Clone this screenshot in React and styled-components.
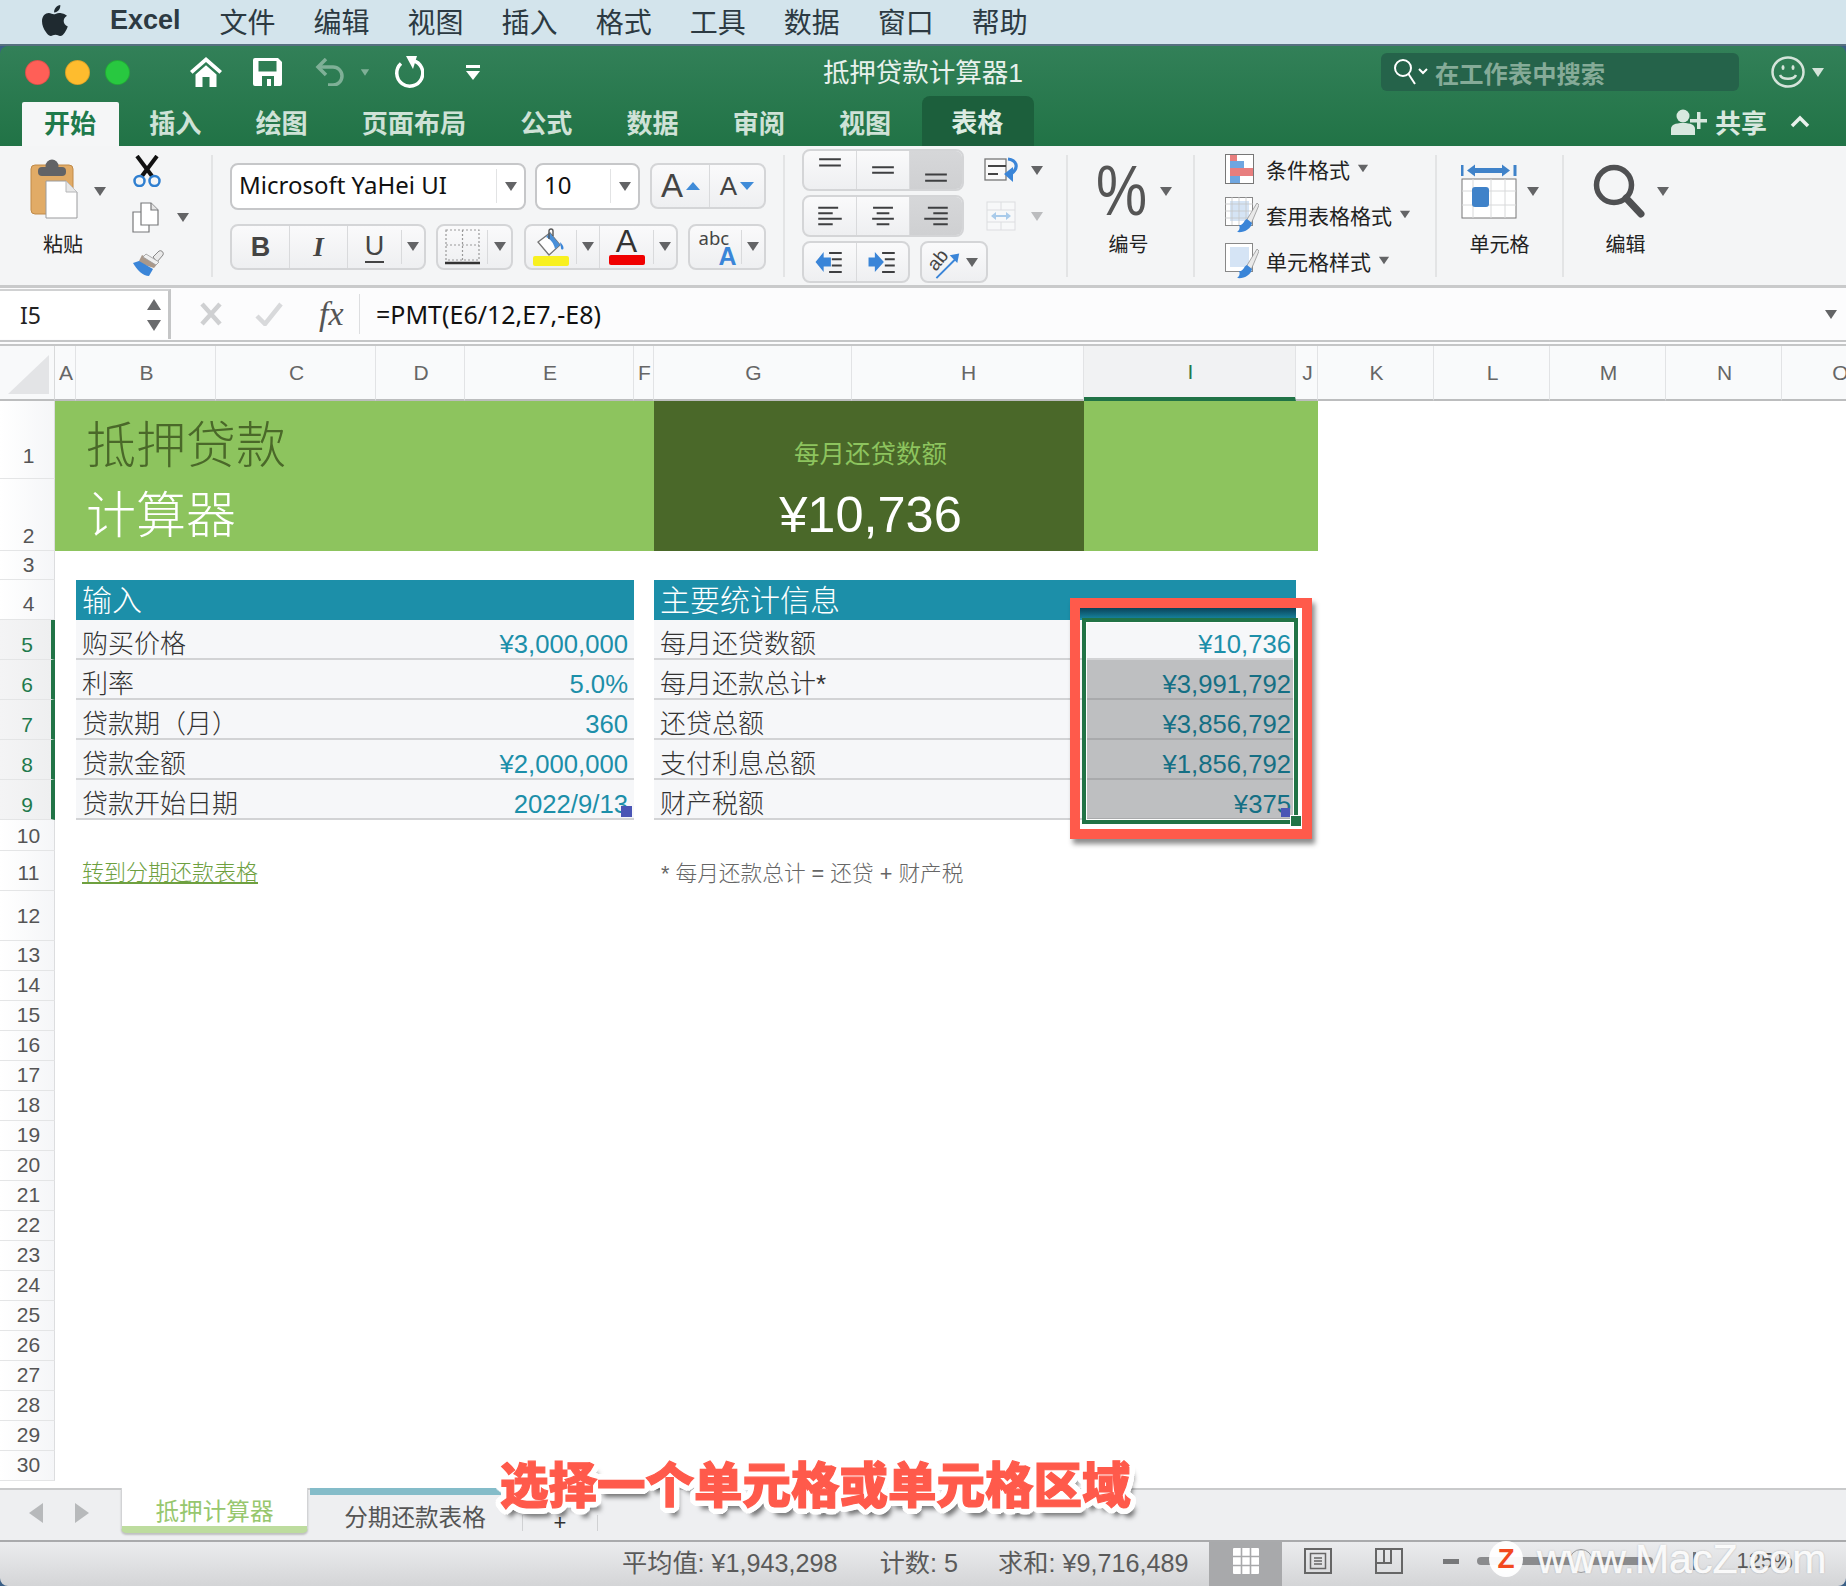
import styled, { createGlobalStyle } from "styled-components";

const CJK = `"Liberation Sans", "Noto Sans CJK SC", sans-serif`;
const SERIF = `"Liberation Sans", "Noto Sans CJK SC", sans-serif`;

// white outline for the big caption, a ring of hard text shadows
const outlineRing = Array.from({ length: 24 }, (_, i) => {
  const a = (i / 24) * Math.PI * 2;
  return `${(Math.cos(a) * 6).toFixed(1)}px ${(Math.sin(a) * 6).toFixed(1)}px 0 #fff`;
}).join(", ");

const GlobalStyle = createGlobalStyle`
  html, body {
    margin: 0;
    padding: 0;
    background: #3a5f86;
  }
  * {
    box-sizing: border-box;
  }
`;

const Screen = styled.div`
  position: relative;
  width: 1846px;
  height: 1586px;
  display: flex;
  flex-direction: column;
  overflow: hidden;
  font-family: ${CJK};
`;

/* mac menu bar */
const MenuBar = styled.div`
  height: 46px;
  flex: none;
  display: flex;
  align-items: center;
  gap: 38px;
  padding: 0 0 3px 42px;
  background: #d3e4ec;
  border-bottom: 2px solid #56707f;
  color: #2c3a42;
  font-size: 28px;
`;

const MenuBrand = styled.span`
  font-family: "Liberation Sans", sans-serif;
  font-weight: 700;
  font-size: 27px;
  margin-left: 4px;
  margin-right: 1px;
`;

const Window = styled.div`
  flex: 1;
  display: flex;
  flex-direction: column;
  border-radius: 8px;
  overflow: hidden;
  min-height: 0;
`;

const GreenHead = styled.header`
  height: 100px;
  flex: none;
  display: flex;
  flex-direction: column;
  background: linear-gradient(#328058, #217346);
`;

const TitleRow = styled.div`
  height: 50px;
  padding-top: 2px;
  display: grid;
  grid-template-columns: 1fr auto 1fr;
  align-items: center;
`;

const TitleLeft = styled.div`
  display: flex;
  align-items: center;
  padding-left: 25px;
`;

const Light = styled.span`
  width: 25px;
  height: 25px;
  border-radius: 50%;
  background: ${({ $color }) => $color};
  border: 1px solid rgba(0, 0, 0, 0.14);
  margin-right: 15px;
`;

const QuickIcon = styled.span`
  display: flex;
  align-items: center;
  margin-left: ${({ $ml }) => $ml}px;
`;

const WindowTitle = styled.div`
  color: #e8f1ec;
  font-size: 26.5px;
  line-height: 30px;
  padding-top: 2px;
`;

const TitleRight = styled.div`
  display: flex;
  align-items: center;
  justify-content: flex-end;
  padding-right: 22px;
`;

const SearchBox = styled.div`
  width: 358px;
  height: 38px;
  margin-right: 32px;
  padding-left: 12px;
  display: flex;
  align-items: center;
  gap: 6px;
  border-radius: 6px;
  background: #25634a;
  color: #85ab98;
  font-size: 24.3px;
  font-weight: 700;
`;

const TabRow = styled.div`
  height: 50px;
  padding-left: 22px;
  display: flex;
  align-items: flex-end;
`;

const RibbonTab = styled.div`
  height: ${({ $kind }) => ($kind === "table" ? 50 : 44)}px;
  padding: ${({ $kind }) =>
    $kind === "active" ? "0 23px 5px 22px" : $kind === "table" ? "0 30px 0 29px" : "0 27px 5px"};
  margin: ${({ $kind }) =>
    $kind === "active" ? "0 3px 0 0" : $kind === "table" ? "0 0 0 4px" : "0"};
  display: flex;
  align-items: center;
  border-radius: ${({ $kind }) => ($kind === "table" ? "8px 8px 0 0" : "2px 2px 0 0")};
  background: ${({ $kind }) =>
    $kind === "active" ? "#f5f6f7" : $kind === "table" ? "#1c5f3c" : "transparent"};
  color: ${({ $kind }) =>
    $kind === "active" ? "#1f7a4c" : $kind === "table" ? "#dcebe2" : "#cfe2d7"};
  font-size: 26.13px;
  font-weight: 700;
`;

const ShareArea = styled.div`
  margin-left: auto;
  height: 44px;
  padding: 0 36px 5px 0;
  display: flex;
  align-items: center;
  color: #d8e8df;
  font-size: 26px;
  font-weight: 700;
`;

const ShareLabel = styled.span`
  margin: 0 23px 0 8px;
`;

/* ribbon */
const Ribbon = styled.section`
  height: 142px;
  flex: none;
  display: flex;
  padding: 9px 0;
  background: #f4f5f6;
  border-bottom: 3px solid #c9cacb;
`;

const RibbonSection = styled.div`
  width: ${({ $w }) => $w}px;
  height: 122px;
  flex: none;
  display: flex;
  align-items: ${({ $top }) => ($top ? "flex-start" : "center")};
  justify-content: ${({ $center }) => ($center ? "center" : "flex-start")};
  padding-left: ${({ $pl }) => $pl || 0}px;
  padding-right: ${({ $pr }) => $pr || 0}px;
  border-right: ${({ $last }) => ($last ? "none" : "2px solid #e3e4e5")};
`;

const BigTool = styled.div`
  width: ${({ $w }) => ($w ? `${$w}px` : "auto")};
  display: flex;
  flex-direction: column;
  align-items: center;
`;

const BigIconRow = styled.div`
  height: 72px;
  display: flex;
  align-items: center;
  gap: ${({ $gap }) => $gap ?? 10}px;
  margin-left: ${({ $ml }) => $ml || 0}px;
`;

const PasteSlot = styled.span`
  display: flex;
  margin: 0 19px 4px 0;
`;

const BigLabel = styled.div`
  margin-top: 6px;
  font-size: 20px;
  line-height: 24px;
  color: #222;
`;

const Caret = styled.span`
  display: inline-block;
  flex: none;
  width: 0;
  height: 0;
  border-left: 6px solid transparent;
  border-right: 6px solid transparent;
  border-top: 9px solid ${({ $tone }) => $tone || "#636466"};
`;

const MiniCaret = styled(Caret)`
  transform: scale(0.7);
`;

const SmallTools = styled.div`
  height: 122px;
  margin-left: 26px;
  display: flex;
  flex-direction: column;
  justify-content: space-between;
`;

const SmallTool = styled.div`
  display: flex;
  align-items: center;
  gap: 18px;
`;

const FontRows = styled.div`
  display: flex;
  flex-direction: column;
  gap: 14px;
`;

const ToolRow = styled.div`
  display: flex;
  align-items: center;
  gap: 10px;
`;

const Combo = styled.div`
  width: ${({ $w }) => $w}px;
  height: 47px;
  margin-right: ${({ $mr }) => $mr || 0}px;
  display: flex;
  align-items: center;
  padding: 0 0 3px 7px;
  background: #fff;
  border: 2px solid #c6c7c9;
  border-radius: 8px;
  color: #111;
  font-family: "Noto Sans", sans-serif;
  font-size: 24px;
`;

const ComboDrop = styled.div`
  margin: 3px 0 0 auto;
  width: 28px;
  height: 34px;
  display: flex;
  align-items: center;
  justify-content: center;
  border-left: 1px solid #e2e3e4;
`;

const Group = styled.div`
  width: ${({ $w }) => $w}px;
  height: ${({ $h }) => $h || 46}px;
  margin-left: ${({ $ml }) => $ml || 0}px;
  display: flex;
  overflow: hidden;
  border: 2px solid #d4d5d7;
  border-radius: 8px;
  background: linear-gradient(#fafafb, #eeeff1);
`;

const GroupBtn = styled.div`
  flex: ${({ $w }) => ($w ? `0 0 ${$w}px` : "1")};
  min-width: 0;
  display: flex;
  flex-direction: column;
  align-items: center;
  justify-content: center;
  color: #444;
  background: ${({ $on }) => ($on ? "linear-gradient(#d6d7d9, #cfd0d2)" : "transparent")};
  border-right: ${({ $end }) => ($end ? "none" : "1px solid #d9dadc")};
`;

const DropBtn = styled.div`
  flex: 0 0 ${({ $w }) => $w || 23}px;
  align-self: center;
  height: 34px;
  display: flex;
  align-items: center;
  justify-content: center;
  border-left: 1px solid #d9dadc;
`;

const StyleLetter = styled.span`
  font-family: ${({ $serif }) => ($serif ? '"Liberation Serif", serif' : '"Liberation Sans", sans-serif')};
  font-size: 27px;
  font-weight: ${({ $bold }) => ($bold ? 700 : 400)};
  font-style: ${({ $italic }) => ($italic ? "italic" : "normal")};
  line-height: 30px;
  color: #444;
  border-bottom: ${({ $under }) => ($under ? "2px solid #444" : "none")};
`;

const GrowLetter = styled.span`
  font-family: "Liberation Sans", sans-serif;
  font-size: ${({ $size }) => $size}px;
  line-height: 40px;
  color: #444;
`;

const Triangle = styled.span`
  width: 0;
  height: 0;
  margin-left: 3px;
  border-left: 7px solid transparent;
  border-right: 7px solid transparent;
  ${({ $down }) =>
    $down ? "border-top: 8px solid #3f8bd8;" : "border-bottom: 8px solid #3f8bd8;"}
`;

const GrowBtn = styled(GroupBtn)`
  flex-direction: row;
`;

const ColorBar = styled.span`
  width: 36px;
  height: 10px;
  flex: none;
  border-radius: 2px;
  background: ${({ $color }) => $color};
`;

const FontColorLetter = styled.span`
  font-family: "Liberation Sans", sans-serif;
  font-size: 32px;
  line-height: 27px;
  color: #333;
`;

const AbcBox = styled.span`
  position: relative;
  width: 38px;
  height: 42px;
`;

const AbcText = styled.span`
  position: absolute;
  left: 2px;
  top: 2px;
  font-family: "Noto Sans", sans-serif;
  font-size: 18.5px;
  line-height: 20px;
  color: #444;
`;

const AbcLetter = styled.span`
  position: absolute;
  right: -2px;
  bottom: 0;
  font-family: "Liberation Sans", sans-serif;
  font-weight: 700;
  font-size: 25px;
  line-height: 24px;
  color: #3a85d8;
`;

const FillDivider = styled(GroupBtn)`
  border-left: 1px solid #d9dadc;
`;

const AlignRows = styled.div`
  display: flex;
  flex-direction: column;
  gap: 4px;
`;

const AlignRow = styled.div`
  height: 42px;
  display: flex;
  align-items: center;
`;

const OrientCaret = styled(Caret)`
  align-self: center;
  margin-right: 8px;
`;

const Percent = styled.span`
  display: block;
  width: 52px;
  font-family: "Liberation Sans", sans-serif;
  font-size: 70px;
  line-height: 60px;
  color: #555;
  transform: scaleX(0.82);
  transform-origin: left center;
`;

const StyleRows = styled.div`
  display: flex;
  flex-direction: column;
  gap: 10px;
  margin-top: -3px;
`;

const StyleRow = styled.div`
  height: 36px;
  display: flex;
  align-items: center;
  color: #222;
  font-size: 21px;
`;

const StyleIcon = styled.span`
  width: 41px;
  display: flex;
`;

const StyleCaret = styled(Caret)`
  margin-left: 7px;
  transform: scale(0.85);
`;

/* formula bar */
const FormulaBar = styled.div`
  height: 58px;
  flex: none;
  display: flex;
  align-items: center;
  background: #fcfcfd;
  border-bottom: 6px double #c5c6c7;
`;

const NameBox = styled.div`
  width: 171px;
  height: 50px;
  display: flex;
  align-items: center;
  justify-content: space-between;
  padding: 0 7px 0 20px;
  background: #fff;
  border-top: 2px solid #d0d1d2;
  border-right: 3px solid #c5c6c7;
  color: #222;
  font-family: "Noto Sans", sans-serif;
  font-size: 23px;
`;

const Stepper = styled.div`
  display: flex;
  flex-direction: column;
  gap: 10px;
`;

const StepArrow = styled.span`
  width: 0;
  height: 0;
  border-left: 7px solid transparent;
  border-right: 7px solid transparent;
  ${({ $down }) =>
    $down ? "border-top: 11px solid #6a6b6d;" : "border-bottom: 11px solid #6a6b6d;"}
`;

const FormulaTools = styled.div`
  width: 189px;
  height: 40px;
  display: flex;
  align-items: center;
  padding-left: 29px;
  gap: 33px;
  border-right: 1px solid #dddee0;
`;

const FxLabel = styled.span`
  font-family: "Liberation Serif", serif;
  font-style: italic;
  font-size: 34px;
  color: #555;
  margin-left: 3px;
`;

const FormulaText = styled.div`
  flex: 1;
  padding-left: 16px;
  font-family: "Noto Sans", sans-serif;
  font-size: 25px;
  color: #111;
`;

const FormulaDrop = styled.div`
  padding-right: 9px;
  display: flex;
`;

/* spreadsheet */
const Sheet = styled.main`
  flex: none;
  height: 1142px;
  overflow: hidden;
  display: grid;
  grid-template-columns: 55px 21px 140px 160px 89px 169px 20px 198px 232px 212px 22px 116px 116px 116px 116px 116px;
  grid-template-rows: 55px 78px 72px 29px 40px 40px 40px 40px 40px 40px 31px 40px 50px repeat(18, 30px) 7px;
  background: #fff;
`;

const CornerCell = styled.div`
  grid-column: 1;
  grid-row: 1;
  padding: 9px 5px 5px 8px;
  background: #f8f9fa;
  border-right: 1px solid #d8d9da;
  border-bottom: 2px solid #bcbdbe;
`;

const CornerMark = styled.div`
  height: 100%;
  background: #e3e4e6;
  clip-path: polygon(100% 0, 100% 100%, 0 100%);
`;

const ColHead = styled.div`
  display: flex;
  align-items: center;
  justify-content: center;
  padding-left: 2px;
  font-size: 21px;
  color: ${({ $on }) => ($on ? "#1f7a4c" : "#666")};
  background: ${({ $on }) => ($on ? "#f1f2f3" : "#f9fafb")};
  border-right: 1px solid #e2e3e5;
  border-bottom: ${({ $on }) => ($on ? "4px solid #217346" : "2px solid #bcbdbe")};
`;

const RowHead = styled.div`
  grid-column: 1;
  grid-row: ${({ $row }) => $row + 1};
  display: flex;
  align-items: flex-end;
  justify-content: center;
  padding: 0 0 ${({ $lift }) => $lift || 0}px 3px;
  line-height: 28px;
  font-size: 21px;
  color: ${({ $on }) => ($on ? "#1f7a4c" : "#555")};
  background: ${({ $on }) =>
    $on ? "linear-gradient(90deg, #f4f4f5, #eeeff0)" : "linear-gradient(90deg, #fff, #f5f6f8)"};
  border-bottom: 1px solid #e4e5e6;
  border-right: ${({ $on }) => ($on ? "4px solid #217346" : "1px solid #dcdddf")};
`;

const BannerLeft = styled.div`
  grid-column: 2 / 8;
  grid-row: 2 / 4;
  padding: 10px 0 0 31px;
  background: #8dc45e;
`;

const BannerTitle = styled.div`
  font-family: ${SERIF};
  font-size: 50px;
  font-weight: 300;
  line-height: 70px;
  color: ${({ $light }) => ($light ? "#fff" : "#4a6829")};
`;

const BannerDark = styled.div`
  grid-column: 8 / 10;
  grid-row: 2 / 4;
  padding: 38px 0 0 3px;
  display: flex;
  flex-direction: column;
  align-items: center;
  background: #4a6829;
`;

const BannerCaption = styled.div`
  font-family: ${SERIF};
  font-size: 25.5px;
  line-height: 30px;
  color: #8dc45e;
`;

const BannerAmount = styled.div`
  margin-top: 16px;
  font-family: "Liberation Sans", sans-serif;
  font-size: 50.5px;
  line-height: 60px;
  color: #fff;
`;

const BannerRight = styled.div`
  grid-column: 10 / 12;
  grid-row: 2 / 4;
  background: #8dc45e;
`;

const SectionBar = styled.div`
  grid-column: ${({ $col }) => $col};
  grid-row: 5;
  display: flex;
  align-items: center;
  padding: 0 0 4px 6px;
  background: #1c8fa9;
  color: #fff;
  font-family: ${SERIF};
  font-weight: 300;
  font-size: 30px;
`;

const RowCell = styled.div`
  position: relative;
  grid-column: ${({ $col }) => $col};
  grid-row: ${({ $row }) => $row + 1};
  display: flex;
  align-items: flex-end;
  justify-content: ${({ $split }) => ($split ? "space-between" : "flex-start")};
  padding: 0 6px;
  line-height: 28px;
  background: #f6f7f9;
  border-bottom: 2px solid #d2d3d5;
  color: #333;
  font-family: ${SERIF};
  font-weight: 300;
  font-size: 26px;
`;

const Value = styled.span`
  font-family: "Liberation Sans", sans-serif;
  font-weight: 400;
  font-size: 25.7px;
  color: #1c8fa9;
`;

const ValueCell = styled.div`
  position: relative;
  grid-column: 10;
  grid-row: ${({ $row }) => $row + 1};
  display: flex;
  align-items: flex-end;
  justify-content: flex-end;
  padding-right: 5px;
  line-height: 28px;
  background: ${({ $dim }) => ($dim ? "#bebfc1" : "#f6f7f9")};
  border-bottom: 2px solid ${({ $dim }) => ($dim ? "#a9aaac" : "#d2d3d5")};
  font-family: "Liberation Sans", sans-serif;
  font-size: 25.7px;
  color: ${({ $dim }) => ($dim ? "#156f84" : "#1c8fa9")};
`;

const CellMark = styled.span`
  position: absolute;
  right: ${({ $r }) => $r}px;
  bottom: 1px;
  width: ${({ $size }) => $size}px;
  height: ${({ $size }) => $size}px;
  background: #4a55b5;
`;

const LinkCell = styled.a`
  grid-column: 3 / 7;
  grid-row: 12;
  align-self: end;
  justify-self: start;
  margin: 0 0 3px 6px;
  line-height: 30px;
  color: #6ea03f;
  font-family: ${SERIF};
  font-weight: 300;
  font-size: 22px;
  text-decoration: underline;
`;

const NoteCell = styled.div`
  grid-column: 8 / 11;
  grid-row: 12;
  align-self: end;
  margin: 0 0 2px 7px;
  line-height: 30px;
  color: #666;
  font-family: ${SERIF};
  font-weight: 300;
  font-size: 21.7px;
`;

const SelectionAnchor = styled.div`
  grid-column: 10;
  grid-row: 6 / 11;
  position: relative;
`;

const RedFrame = styled.div`
  position: absolute;
  left: -14px;
  right: -16px;
  top: -22px;
  bottom: -19px;
  border: 10px solid #ff5a4b;
  box-shadow: 3px 5px 5px rgba(0, 0, 0, 0.45);
`;

const FrameShade = styled.div`
  position: absolute;
  left: 0;
  top: 0;
  width: 216px;
  height: 10px;
  background: linear-gradient(#0a4258, #167f99);
`;

const SelectionBox = styled.div`
  position: absolute;
  left: -2px;
  right: -2px;
  top: -2px;
  bottom: -4px;
  border: 4px solid #217346;
  box-shadow: inset 0 0 0 1px #fff;
`;

const FillHandle = styled.div`
  position: absolute;
  right: -6px;
  bottom: -7px;
  width: 12px;
  height: 12px;
  background: #217346;
  border: 1px solid #fff;
`;

/* sheet tabs + status */
const SheetTabs = styled.div`
  height: 52px;
  flex: none;
  display: flex;
  background: #eeeff1;
  border-top: 2px solid #c9cacb;
`;

const TabNav = styled.div`
  width: 121px;
  display: flex;
  align-items: center;
  padding: 0 0 4px 29px;
  gap: 32px;
`;

const NavArrow = styled.span`
  width: 0;
  height: 0;
  border-top: 10px solid transparent;
  border-bottom: 10px solid transparent;
  ${({ $right }) =>
    $right ? "border-left: 14px solid #b7b9bb;" : "border-right: 14px solid #b7b9bb;"}
`;

const ActiveSheet = styled.div`
  width: 187px;
  height: 45px;
  margin-top: -2px;
  padding-top: 8px;
  display: flex;
  justify-content: center;
  background: #fff;
  border: 1px solid #d2d3d5;
  border-top: none;
  border-bottom: 7px solid #bddc9e;
  border-radius: 0 0 5px 5px;
  box-shadow: 0 2px 2px rgba(0, 0, 0, 0.2);
  color: #97c76e;
  font-size: 23.6px;
  line-height: 32px;
`;

const OtherSheet = styled.div`
  width: 214px;
  display: flex;
  flex-direction: column;
  align-items: center;
  color: #555;
  font-size: 23.6px;
  line-height: 32px;
`;

const SheetBand = styled.span`
  align-self: stretch;
  height: 7px;
  margin: -2px 8px 7px 2px;
  background: #84bcc9;
`;

const AddSheet = styled.div`
  width: 76px;
  height: 16px;
  margin-top: 25px;
  border-left: 1px solid #d0d1d3;
  border-right: 1px solid #d0d1d3;
  display: flex;
  justify-content: center;
  color: #333;
  font-size: 22px;
  line-height: 16px;
`;

const StatusBar = styled.footer`
  height: 46px;
  flex: none;
  display: flex;
  align-items: center;
  padding-left: 622px;
  background: linear-gradient(#ebecee, #d4d5d7);
  border-top: 2px solid #a9aaac;
  color: #5a5a5a;
  font-size: 25.2px;
`;

const StatusText = styled.span`
  margin: 0 ${({ $mr }) => $mr}px 6px 0;
  white-space: nowrap;
`;

const ViewBtn = styled.div`
  width: ${({ $w }) => $w}px;
  height: 44px;
  flex: none;
  display: flex;
  align-items: center;
  justify-content: center;
  padding-bottom: 6px;
  background: ${({ $on }) => ($on ? "#a8a9ab" : "transparent")};
`;

const ZoomMinus = styled.span`
  width: 16px;
  height: 5px;
  margin: 0 18px 6px 19px;
  background: #77787a;
`;

const ZoomTrack = styled.div`
  position: relative;
  width: 176px;
  height: 8px;
  margin-bottom: 6px;
  border-radius: 4px;
  background: #8a8b8d;
`;

const ZoomKnob = styled.span`
  position: absolute;
  left: 92px;
  top: -8px;
  width: 24px;
  height: 24px;
  border-radius: 50%;
  background: #e8e9ea;
  border: 1px solid #9a9b9d;
`;

const ZoomTick = styled.span`
  width: 3px;
  height: 18px;
  margin: 0 40px 6px 40px;
  background: #77787a;
`;

const ZoomValue = styled.span`
  font-size: 22px;
  margin-bottom: 6px;
`;

/* overlays */
const Caption = styled.div`
  position: absolute;
  left: 500px;
  top: 1446px;
  font-family: "Noto Sans CJK SC", sans-serif;
  font-weight: 900;
  font-size: 48.5px;
  line-height: 72px;
  white-space: nowrap;
  color: #ff5a4b;
  -webkit-text-stroke: 1.2px #ff5a4b;
  text-shadow: ${outlineRing}, 5px 9px 5px rgba(0, 0, 0, 0.55);
`;

const Watermark = styled.div`
  position: absolute;
  left: 1489px;
  top: 1536px;
  display: flex;
  align-items: center;
  gap: 14px;
  font-family: "Liberation Sans", sans-serif;
  font-size: 41px;
  line-height: 46px;
  color: rgba(255, 255, 255, 0.95);
  -webkit-text-stroke: 0.5px rgba(255, 255, 255, 0.9);
  text-shadow: 0 0 2px rgba(0, 0, 0, 0.3);
`;

const WatermarkBadge = styled.span`
  width: 34px;
  height: 36px;
  display: flex;
  align-items: center;
  justify-content: center;
  border-radius: 50%;
  background: rgba(255, 255, 255, 0.95);
  color: #f2491f;
  font-weight: 700;
  font-size: 28px;
  -webkit-text-stroke: 0;
  text-shadow: none;
`;

const AppleLogo = () => (
  <svg width="26" height="31" viewBox="0 0 26 31" fill="#1f2a30">
    <path d="M18.3 0c.2 2.2-.6 3.9-1.600 5.200-1.100 1.300-2.800 2.300-4.600 2.200-.2-2 .7-3.900 1.700-5C14.900 1.100 16.800.1 18.300 0z" />
    <path d="M25 10.700c-2.500 1.600-3.300 3.300-3.300 5.400 0 2.500 1.500 4.400 4.100 5.500-.7 2-1.700 4-3 5.800-1.300 1.800-2.600 3.500-4.600 3.500-1.900 0-2.500-1.200-4.700-1.200-2.300 0-3 1.200-4.800 1.200-2 0-3.400-1.800-4.800-3.800C1.700 24.300 0 20.100 0 16.200 0 10.900 3.400 8 6.800 8c2 0 3.700 1.300 5 1.300 1.200 0 3.100-1.400 5.400-1.400 1 0 4.900.1 7.800 2.800z" />
  </svg>
);

const HomeIcon = () => (
  <svg width="32" height="30" viewBox="0 0 32 30" fill="#fff">
    <path d="M16 0 L32 14 L29.500 16.800 L16 5 L2.500 16.800 L0 14Z" />
    <path d="M5.500 17.500 L16 8.300 L26.500 17.500 V30 H19.500 V20 H12.500 V30 H5.500Z" />
  </svg>
);

const SaveIcon = () => (
  <svg width="29" height="28" viewBox="0 0 29 28">
    <path
      fill="#fff"
      fillRule="evenodd"
      d="M2 0H25L29 4V26a2 2 0 0 1-2 2H2a2 2 0 0 1-2-2V2a2 2 0 0 1 2-2zM5.500 3V13.500H23.500V3zM9 18V28H21V18z"
    />
    <rect x="14" y="21" width="4" height="7" fill="#fff" />
  </svg>
);

const UndoIcon = () => (
  <svg width="32" height="28" viewBox="0 0 32 28" fill="none" stroke="#7fb097" strokeWidth="3.500">
    <path d="M3 9H18a9 9 0 0 1 0 18H13" />
    <path d="M11 1 L3 9 L11 17" />
  </svg>
);

const RedoIcon = () => (
  <svg width="32" height="32" viewBox="0 0 32 32" fill="none">
    <path d="M9 7.500A13 13 0 1 0 21 4.500" stroke="#fff" strokeWidth="3.500" />
    <path d="M14 0 L25 0 L21 13Z" fill="#fff" />
  </svg>
);

const CustomizeIcon = () => (
  <svg width="14" height="15" viewBox="0 0 14 15" fill="#fff">
    <rect y="0" width="14" height="3" />
    <path d="M0 6H14L7 15Z" />
  </svg>
);

const SearchGlyph = () => (
  <svg width="36" height="28" viewBox="0 0 36 28" fill="none" stroke="#fff" strokeWidth="2">
    <circle cx="10" cy="10" r="8" />
    <path d="M15.500 16 L22 26" />
    <path d="M26 11 L30 15 L34 11" />
  </svg>
);

const SmileyIcon = () => (
  <svg width="34" height="32" viewBox="0 0 34 32" fill="none" stroke="#d4e4da" strokeWidth="2.500">
    <ellipse cx="17" cy="16" rx="15.500" ry="14.500" />
    <path d="M9 19c2 5 14 5 16 0" />
    <ellipse cx="12" cy="11.500" rx="1.500" ry="2.500" fill="#d4e4da" strokeWidth="0" />
    <ellipse cx="22" cy="11.500" rx="1.500" ry="2.500" fill="#d4e4da" strokeWidth="0" />
  </svg>
);

const ShareIcon = () => (
  <svg width="36" height="26" viewBox="0 0 36 26" fill="#d8e8df">
    <circle cx="12" cy="7" r="6.500" />
    <path d="M0 26V20c0-4 4-6 12-6s12 2 12 6v6z" />
    <rect x="26" y="3" width="3.500" height="17" />
    <rect x="19" y="10" width="17" height="3.500" />
  </svg>
);

const ChevronUp = () => (
  <svg width="20" height="13" viewBox="0 0 20 13" fill="none" stroke="#e8f1ec" strokeWidth="3.500">
    <path d="M2 11 L10 3 L18 11" />
  </svg>
);

const PasteIcon = () => (
  <svg width="48" height="60" viewBox="0 0 48 60">
    <rect x="1" y="6" width="42" height="49" rx="4" fill="#e1ab66" stroke="#c08a48" />
    <circle cx="22" cy="7" r="6.500" fill="#626366" />
    <rect x="8" y="8" width="28" height="9" rx="4" fill="#626366" />
    <path d="M16 22H36L47 33V59H16z" fill="#fff" stroke="#9a9b9d" />
    <path d="M36 22V33H47" fill="#e8e8e8" stroke="#b5b6b8" />
  </svg>
);

const ScissorsIcon = () => (
  <svg width="30" height="32" viewBox="0 0 30 32" fill="none">
    <path d="M5 1 L20 21" stroke="#111" strokeWidth="4" />
    <path d="M25 1 L10 21" stroke="#111" strokeWidth="4" />
    <circle cx="7.500" cy="26" r="5" stroke="#2f7fd0" strokeWidth="2.500" />
    <circle cx="22.500" cy="26" r="5" stroke="#2f7fd0" strokeWidth="2.500" />
  </svg>
);

const CopyIcon = () => (
  <svg width="27" height="31" viewBox="0 0 27 31" fill="#fff" stroke="#77787a" strokeWidth="1.200">
    <path d="M1 10H17V30H1z" />
    <path d="M9 1H19L26 8V23H9z" />
    <path d="M19 1V8H26" fill="#e5e5e5" />
  </svg>
);

const PainterIcon = () => (
  <svg width="33" height="29" viewBox="0 0 33 29">
    <path d="M21 9 L27 3a3 3 0 0 1 4 4 L25 14z" fill="#e9e9e9" stroke="#888" />
    <path d="M10 7 L26 15 L22 20 L6 15z" fill="#a9988a" />
    <path d="M14 6 L27 14 L24 17 L11 9z" fill="#efefef" stroke="#999" strokeWidth="0.800" />
    <path d="M1 15 L7 13 L21 21 L17 28C11 28 5 22 1 15z" fill="#3a85d8" />
  </svg>
);

const BorderIcon = () => (
  <svg width="36" height="36" viewBox="0 0 36 36" fill="none">
    <g stroke="#999" strokeWidth="1.200" strokeDasharray="2 2">
      <rect x="1" y="1" width="33" height="30" />
      <path d="M17.500 1V31M1 16H34" />
    </g>
    <path d="M0 34H35" stroke="#333" strokeWidth="2.500" />
  </svg>
);

const BucketIcon = () => (
  <svg width="28" height="28" viewBox="0 0 28 28">
    <path d="M1 14 L13 5 L23 17 L12 27z" fill="#fff" stroke="#777" strokeWidth="1.300" />
    <path d="M9 9 L13 5 L23 17 L18 21 C17 15 13 11 9 9z" fill="#4a90d9" />
    <path d="M12 11V3a2 2 0 0 1 4 0V8" fill="none" stroke="#555" strokeWidth="1.400" />
    <path d="M23 14c2 2 3.500 4 3.500 6s-2.500 2-2.500 0z" fill="#3a85d8" />
  </svg>
);

const Lines = ({ w = 52, h = 42, lines }) => (
  <svg width={w} height={h} viewBox={`0 0 ${w} ${h}`} stroke="#3e3f41" strokeWidth="2.200">
    {lines.map(([x1, x2, y]) => (
      <line key={`${x1}-${y}`} x1={x1} x2={x2} y1={y} y2={y} />
    ))}
  </svg>
);

const IndentIcon = ({ right }) => (
  <svg width="52" height="42" viewBox="0 0 54 42">
    <g stroke="#3e3f41" strokeWidth="2.200">
      <line x1="26" x2="40" y1="11" y2="11" />
      <line x1="29" x2="40" y1="18" y2="18" />
      <line x1="29" x2="40" y1="25" y2="25" />
      <line x1="26" x2="40" y1="32" y2="32" />
    </g>
    {right ? (
      <path d="M11 16H18V10L28 21L18 32V26H11z" fill="#3a85d8" />
    ) : (
      <path d="M28 16H20V10L11 21L20 32V26H28z" fill="#3a85d8" />
    )}
  </svg>
);

const OrientIcon = () => (
  <svg width="44" height="40" viewBox="0 0 44 40" fill="none">
    <text
      x="7"
      y="27"
      transform="rotate(-50 14 22)"
      fontFamily="Liberation Sans, sans-serif"
      fontSize="20"
      fill="#444"
    >
      ab
    </text>
    <path d="M14 37 L36 15" stroke="#3a85d8" strokeWidth="2" />
    <path d="M28 13 L38 11 L36 21z" fill="#3a85d8" />
  </svg>
);

const WrapIcon = () => (
  <svg width="36" height="26" viewBox="0 0 36 26" fill="none">
    <rect x="1" y="2" width="21" height="21" fill="#fafafa" stroke="#777" strokeWidth="1.300" />
    <path d="M4 9H22M4 17H14" stroke="#444" strokeWidth="2" />
    <path d="M24 2c8 1 12 8 3 15" stroke="#3a85d8" strokeWidth="3.200" />
    <path d="M29 10V25L20 17z" fill="#3a85d8" />
  </svg>
);

const MergeIcon = () => (
  <svg width="30" height="30" viewBox="0 0 30 30" fill="none">
    <rect x="1" y="1" width="28" height="28" fill="#f7f8f9" stroke="#dcdde0" />
    <path d="M1 9H29M1 21H29M15 1V9M15 21V29" stroke="#dcdde0" />
    <path d="M7 15H23" stroke="#a9cbea" strokeWidth="2" />
    <path d="M10 11L5 15L10 19zM20 11L25 15L20 19z" fill="#a9cbea" />
  </svg>
);

const CondFormatIcon = () => (
  <svg width="29" height="30" viewBox="0 0 29 30">
    <rect x="0.500" y="0.500" width="28" height="29" fill="#fff" stroke="#777" />
    <rect x="5" y="1" width="7" height="6" fill="#e87e7e" />
    <rect x="5" y="7" width="14" height="7" fill="#6fa6e0" />
    <rect x="5" y="14" width="23" height="8" fill="#e87e7e" />
    <rect x="5" y="22" width="10" height="7" fill="#6fa6e0" />
  </svg>
);

const TableStyleIcon = ({ grid }) => (
  <svg width="34" height="36" viewBox="0 0 34 36">
    <rect x="0.500" y="0.500" width="27" height="28" fill="#fff" stroke="#888" />
    <rect x="5" y="4" width="19" height="20" fill="#d5e4f5" />
    {grid && (
      <path d="M0 7H28M0 14H28M0 21H28M7 0V28M14 0V28M21 0V28" stroke="#c5c6c8" strokeWidth="0.800" />
    )}
    <path d="M21 24 L32 6 L34 8 L26 27z" fill="#e9e9e9" stroke="#888" strokeWidth="0.700" />
    <path d="M14 28c4 1 5-5 8-6l5 4c-1 6-8 10-15 9 3-2 3-5 2-7z" fill="#3a85d8" />
  </svg>
);

const CellsIcon = () => (
  <svg width="56" height="56" viewBox="0 0 56 56">
    <path d="M1 2V13M54 2V13" stroke="#3f82c9" strokeWidth="3" />
    <path d="M6 7.500L14 1.500V5H41V1.500L49 7.500L41 13.500V10H14V13.500z" fill="#3f82c9" />
    <rect x="1" y="16" width="54" height="39" fill="#fff" stroke="#777" />
    <path d="M12 16V55M30 16V55M44 16V55M1 28H55M1 42H55" stroke="#d8d9da" />
    <rect x="11" y="24" width="17" height="20" rx="3" fill="#3f82c9" />
  </svg>
);

const FindIcon = () => (
  <svg width="53" height="54" viewBox="0 0 53 54" fill="none">
    <circle cx="21" cy="21" r="17.500" stroke="#4f5052" strokeWidth="5.500" />
    <path d="M33 34 L48 50" stroke="#4f5052" strokeWidth="7" strokeLinecap="round" />
  </svg>
);

const CrossIcon = () => (
  <svg width="22" height="24" viewBox="0 0 22 24" stroke="#cfd0d2" strokeWidth="4.500">
    <path d="M2 2L20 22M20 2L2 22" />
  </svg>
);

const CheckIcon = () => (
  <svg width="28" height="24" viewBox="0 0 28 24" fill="none" stroke="#d8d9db" strokeWidth="4.500">
    <path d="M2 14L10 22L26 2" />
  </svg>
);

const GridViewIcon = () => (
  <svg width="26" height="26" viewBox="0 0 26 26">
    <rect width="26" height="26" rx="1" fill="#fff" />
    <path d="M8.500 0V26M17.500 0V26M0 8.500H26M0 17.500H26" stroke="#a8a9ab" strokeWidth="1.600" />
  </svg>
);

const PageViewIcon = () => (
  <svg width="28" height="26" viewBox="0 0 28 26" fill="none" stroke="#666" strokeWidth="2">
    <rect x="1" y="1" width="26" height="24" />
    <rect x="6.500" y="5.500" width="15" height="15" strokeWidth="1.500" />
    <path d="M10 10H18M10 13H18M10 16H18" strokeWidth="1.500" />
  </svg>
);

const BreakViewIcon = () => (
  <svg width="28" height="26" viewBox="0 0 28 26" fill="none" stroke="#666" strokeWidth="2">
    <rect x="1" y="1" width="26" height="24" />
    <path d="M1 15H16V1M9 1V15" />
  </svg>
);

const MENU_ITEMS = ["文件", "编辑", "视图", "插入", "格式", "工具", "数据", "窗口", "帮助"];
const RIBBON_TABS = ["插入", "绘图", "页面布局", "公式", "数据", "审阅", "视图"];

const COLUMNS = ["A", "B", "C", "D", "E", "F", "G", "H", "I", "J", "K", "L", "M", "N", "O"];
const ROW_LIFT = { 1: 8, 4: 1, 11: 3, 12: 10 };

const INPUT_ROWS = [
  { row: 5, label: "购买价格", value: "¥3,000,000" },
  { row: 6, label: "利率", value: "5.0%" },
  { row: 7, label: "贷款期（月）", value: "360" },
  { row: 8, label: "贷款金额", value: "¥2,000,000" },
  { row: 9, label: "贷款开始日期", value: "2022/9/13" },
];

const STAT_ROWS = [
  { row: 5, label: "每月还贷数额", value: "¥10,736" },
  { row: 6, label: "每月还款总计*", value: "¥3,991,792" },
  { row: 7, label: "还贷总额", value: "¥3,856,792" },
  { row: 8, label: "支付利息总额", value: "¥1,856,792" },
  { row: 9, label: "财产税额", value: "¥375" },
];

const ALIGN_V = [
  [[14, 38, 9], [14, 38, 16]],
  [[14, 38, 18], [14, 38, 24]],
  [[14, 38, 26], [14, 38, 33]],
];

const ALIGN_H = [
  [[13, 35, 12], [13, 29, 18], [13, 39, 24], [13, 29, 30]],
  [[15, 37, 12], [19, 33, 18], [14, 38, 24], [19, 33, 30]],
  [[17, 39, 12], [23, 39, 18], [13, 39, 24], [23, 39, 30]],
];

const renderRowHeads = () =>
  Array.from({ length: 30 }, (_, i) => i + 1).map((n) => (
    <RowHead key={n} $row={n} $lift={n >= 13 ? 1 : ROW_LIFT[n]} $on={n >= 5 && n <= 9}>
      {n}
    </RowHead>
  ));

const App = () => {
  return (
    <Screen>
      <GlobalStyle />
      <MenuBar>
        <AppleLogo />
        <MenuBrand>Excel</MenuBrand>
        {MENU_ITEMS.map((item) => (
          <span key={item}>{item}</span>
        ))}
      </MenuBar>

      <Window>
        <GreenHead>
          <TitleRow>
            <TitleLeft>
              <Light $color="#ff5f57" />
              <Light $color="#febc2e" />
              <Light $color="#28c840" />
              <QuickIcon $ml={45}>
                <HomeIcon />
              </QuickIcon>
              <QuickIcon $ml={31}>
                <SaveIcon />
              </QuickIcon>
              <QuickIcon $ml={33}>
                <UndoIcon />
              </QuickIcon>
              <QuickIcon $ml={12}>
                <MiniCaret $tone="#7fb097" />
              </QuickIcon>
              <QuickIcon $ml={21}>
                <RedoIcon />
              </QuickIcon>
              <QuickIcon $ml={42}>
                <CustomizeIcon />
              </QuickIcon>
            </TitleLeft>
            <WindowTitle>抵押贷款计算器1</WindowTitle>
            <TitleRight>
              <SearchBox>
                <SearchGlyph />
                在工作表中搜索
              </SearchBox>
              <SmileyIcon />
              <QuickIcon $ml={7}>
                <Caret $tone="#d4e4da" />
              </QuickIcon>
            </TitleRight>
          </TitleRow>
          <TabRow>
            <RibbonTab $kind="active">开始</RibbonTab>
            {RIBBON_TABS.map((tab) => (
              <RibbonTab key={tab}>{tab}</RibbonTab>
            ))}
            <RibbonTab $kind="table">表格</RibbonTab>
            <ShareArea>
              <ShareIcon />
              <ShareLabel>共享</ShareLabel>
              <ChevronUp />
            </ShareArea>
          </TabRow>
        </GreenHead>

        <Ribbon>
          <RibbonSection $w={213} $pl={30} $top>
            <BigTool $w={66}>
              <BigIconRow>
                <PasteSlot>
                  <PasteIcon />
                </PasteSlot>
              </BigIconRow>
              <BigLabel>粘贴</BigLabel>
            </BigTool>
            <BigIconRow $ml={-2}>
              <Caret />
            </BigIconRow>
            <SmallTools>
              <SmallTool>
                <ScissorsIcon />
              </SmallTool>
              <SmallTool>
                <CopyIcon />
                <Caret />
              </SmallTool>
              <SmallTool>
                <PainterIcon />
              </SmallTool>
            </SmallTools>
          </RibbonSection>

          <RibbonSection $w={572} $pl={17}>
            <FontRows>
              <ToolRow>
                <Combo $w={296} $mr={-1}>
                  Microsoft YaHei UI
                  <ComboDrop>
                    <Caret />
                  </ComboDrop>
                </Combo>
                <Combo $w={105}>
                  10
                  <ComboDrop>
                    <Caret />
                  </ComboDrop>
                </Combo>
                <Group $w={116}>
                  <GrowBtn $w={58}>
                    <GrowLetter $size={33}>A</GrowLetter>
                    <Triangle />
                  </GrowBtn>
                  <GrowBtn $end>
                    <GrowLetter $size={26}>A</GrowLetter>
                    <Triangle $down />
                  </GrowBtn>
                </Group>
              </ToolRow>
              <ToolRow>
                <Group $w={196}>
                  <GroupBtn $w={58}>
                    <StyleLetter $bold>B</StyleLetter>
                  </GroupBtn>
                  <GroupBtn $w={58}>
                    <StyleLetter $serif $italic $bold>
                      I
                    </StyleLetter>
                  </GroupBtn>
                  <GroupBtn $end>
                    <StyleLetter $under>U</StyleLetter>
                  </GroupBtn>
                  <DropBtn>
                    <Caret />
                  </DropBtn>
                </Group>
                <Group $w={77}>
                  <GroupBtn $end>
                    <BorderIcon />
                  </GroupBtn>
                  <DropBtn $w={24}>
                    <Caret />
                  </DropBtn>
                </Group>
                <Group $w={154} $ml={1}>
                  <GroupBtn $w={50} $end>
                    <BucketIcon />
                    <ColorBar $color="#f8f020" />
                  </GroupBtn>
                  <DropBtn $w={23}>
                    <Caret />
                  </DropBtn>
                  <FillDivider $end>
                    <FontColorLetter>A</FontColorLetter>
                    <ColorBar $color="#f00000" />
                  </FillDivider>
                  <DropBtn>
                    <Caret />
                  </DropBtn>
                </Group>
                <Group $w={78}>
                  <GroupBtn $end>
                    <AbcBox>
                      <AbcText>abc</AbcText>
                      <AbcLetter>A</AbcLetter>
                    </AbcBox>
                  </GroupBtn>
                  <DropBtn>
                    <Caret />
                  </DropBtn>
                </Group>
              </ToolRow>
            </FontRows>
          </RibbonSection>

          <RibbonSection $w={283} $pl={17}>
            <AlignRows>
              <AlignRow>
                <Group $w={162} $h={42}>
                  {ALIGN_V.map((lines, i) => (
                    <GroupBtn key={i} $w={i === 2 ? undefined : 53} $end={i === 2} $on={i === 2}>
                      <Lines lines={lines} />
                    </GroupBtn>
                  ))}
                </Group>
                <QuickIcon $ml={20}>
                  <WrapIcon />
                </QuickIcon>
                <QuickIcon $ml={11}>
                  <Caret />
                </QuickIcon>
              </AlignRow>
              <AlignRow>
                <Group $w={162} $h={42}>
                  {ALIGN_H.map((lines, i) => (
                    <GroupBtn key={i} $w={i === 2 ? undefined : 53} $end={i === 2} $on={i === 2}>
                      <Lines lines={lines} />
                    </GroupBtn>
                  ))}
                </Group>
                <QuickIcon $ml={22}>
                  <MergeIcon />
                </QuickIcon>
                <QuickIcon $ml={15}>
                  <Caret $tone="#bbbcbe" />
                </QuickIcon>
              </AlignRow>
              <AlignRow>
                <Group $w={108} $h={42}>
                  <GroupBtn $w={53}>
                    <IndentIcon />
                  </GroupBtn>
                  <GroupBtn $end>
                    <IndentIcon right />
                  </GroupBtn>
                </Group>
                <Group $w={68} $h={42} $ml={10}>
                  <GroupBtn $end>
                    <OrientIcon />
                  </GroupBtn>
                  <OrientCaret />
                </Group>
              </AlignRow>
            </AlignRows>
          </RibbonSection>

          <RibbonSection $w={127} $center $top $pr={4}>
            <BigTool>
              <BigIconRow $gap={12} $ml={10}>
                <Percent>%</Percent>
                <Caret />
              </BigIconRow>
              <BigLabel>编号</BigLabel>
            </BigTool>
          </RibbonSection>

          <RibbonSection $w={242} $pl={30}>
            <StyleRows>
              <StyleRow>
                <StyleIcon>
                  <CondFormatIcon />
                </StyleIcon>
                条件格式
                <StyleCaret />
              </StyleRow>
              <StyleRow>
                <StyleIcon>
                  <TableStyleIcon grid />
                </StyleIcon>
                套用表格格式
                <StyleCaret />
              </StyleRow>
              <StyleRow>
                <StyleIcon>
                  <TableStyleIcon />
                </StyleIcon>
                单元格样式
                <StyleCaret />
              </StyleRow>
            </StyleRows>
          </RibbonSection>

          <RibbonSection $w={127} $center $top>
            <BigTool>
              <BigIconRow>
                <CellsIcon />
                <Caret />
              </BigIconRow>
              <BigLabel>单元格</BigLabel>
            </BigTool>
          </RibbonSection>

          <RibbonSection $w={128} $center $top $last $pr={5}>
            <BigTool>
              <BigIconRow $gap={11} $ml={10}>
                <FindIcon />
                <Caret />
              </BigIconRow>
              <BigLabel>编辑</BigLabel>
            </BigTool>
          </RibbonSection>
        </Ribbon>

        <FormulaBar>
          <NameBox>
            I5
            <Stepper>
              <StepArrow />
              <StepArrow $down />
            </Stepper>
          </NameBox>
          <FormulaTools>
            <CrossIcon />
            <CheckIcon />
            <FxLabel>fx</FxLabel>
          </FormulaTools>
          <FormulaText>=PMT(E6/12,E7,-E8)</FormulaText>
          <FormulaDrop>
            <Caret />
          </FormulaDrop>
        </FormulaBar>

        <Sheet>
          <CornerCell>
            <CornerMark />
          </CornerCell>
          {COLUMNS.map((col) => (
            <ColHead key={col} $on={col === "I"}>
              {col}
            </ColHead>
          ))}
          {renderRowHeads()}

          <BannerLeft>
            <BannerTitle>抵押贷款</BannerTitle>
            <BannerTitle $light>计算器</BannerTitle>
          </BannerLeft>
          <BannerDark>
            <BannerCaption>每月还贷数额</BannerCaption>
            <BannerAmount>¥10,736</BannerAmount>
          </BannerDark>
          <BannerRight />

          <SectionBar $col="3 / 7">输入</SectionBar>
          <SectionBar $col="8 / 11">主要统计信息</SectionBar>

          {INPUT_ROWS.map(({ row, label, value }) => (
            <RowCell key={row} $col="3 / 7" $row={row} $split>
              <span>{label}</span>
              <Value>{value}</Value>
              {row === 9 && <CellMark $r={2} $size={11} />}
            </RowCell>
          ))}

          {STAT_ROWS.map(({ row, label }) => (
            <RowCell key={row} $col="8 / 10" $row={row}>
              {label}
            </RowCell>
          ))}
          {STAT_ROWS.map(({ row, value }) => (
            <ValueCell key={row} $row={row} $dim={row > 5}>
              {value}
              {row === 9 && <CellMark $r={6} $size={9} />}
            </ValueCell>
          ))}

          <LinkCell>转到分期还款表格</LinkCell>
          <NoteCell>* 每月还款总计 = 还贷 + 财产税</NoteCell>

          <SelectionAnchor>
            <RedFrame>
              <FrameShade />
            </RedFrame>
            <SelectionBox />
            <FillHandle />
          </SelectionAnchor>
        </Sheet>

        <SheetTabs>
          <TabNav>
            <NavArrow />
            <NavArrow $right />
          </TabNav>
          <ActiveSheet>抵押计算器</ActiveSheet>
          <OtherSheet>
            <SheetBand />
            分期还款表格
          </OtherSheet>
          <AddSheet>+</AddSheet>
        </SheetTabs>

        <StatusBar>
          <StatusText $mr={42}>平均值: ¥1,943,298</StatusText>
          <StatusText $mr={40}>计数: 5</StatusText>
          <StatusText $mr={21}>求和: ¥9,716,489</StatusText>
          <ViewBtn $w={73} $on>
            <GridViewIcon />
          </ViewBtn>
          <ViewBtn $w={71}>
            <PageViewIcon />
          </ViewBtn>
          <ViewBtn $w={71}>
            <BreakViewIcon />
          </ViewBtn>
          <ZoomMinus />
          <ZoomTrack>
            <ZoomKnob />
          </ZoomTrack>
          <ZoomTick />
          <ZoomValue>125%</ZoomValue>
        </StatusBar>
      </Window>

      <Caption>选择一个单元格或单元格区域</Caption>
      <Watermark>
        <WatermarkBadge>Z</WatermarkBadge>
        www.MacZ.com
      </Watermark>
    </Screen>
  );
};

export default App;
